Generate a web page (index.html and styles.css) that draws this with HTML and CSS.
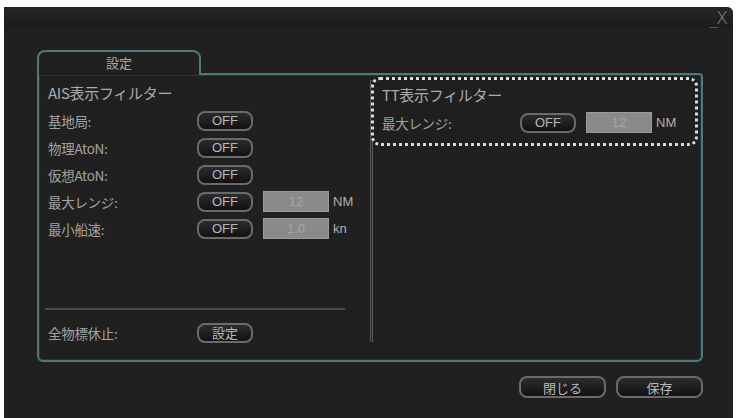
FILE: index.html
```html
<!DOCTYPE html>
<html lang="ja">
<head>
<meta charset="utf-8">
<link rel="stylesheet" href="styles.css">
</head>
<body>
<div class="window">
  <div class="titlebar"><span class="winctl">_X</span></div>
  <div class="main">
    <div class="tab">設定</div>
    <div class="panel">
      <div class="col-left">
        <div class="title">AIS表示フィルター</div>
        <div class="row first"><span class="label">基地局:</span><span class="btn">OFF</span></div>
        <div class="row"><span class="label">物理AtoN:</span><span class="btn">OFF</span></div>
        <div class="row"><span class="label">仮想AtoN:</span><span class="btn">OFF</span></div>
        <div class="row"><span class="label">最大レンジ:</span><span class="btn">OFF</span><span class="field">12</span><span class="unit">NM</span></div>
        <div class="row"><span class="label">最小船速:</span><span class="btn">OFF</span><span class="field">1.0</span><span class="unit">kn</span></div>
        <div class="hrule"></div>
        <div class="row bottom"><span class="label">全物標休止:</span><span class="btn">設定</span></div>
      </div>
      <div class="divider"></div>
      <div class="col-right">
        <div class="ttbox">
          <div class="title">TT表示フィルター</div>
          <div class="row first"><span class="label tt">最大レンジ:</span><span class="btn">OFF</span><span class="field">12</span><span class="unit">NM</span></div>
        </div>
      </div>
    </div>
    <div class="footer">
      <span class="btn big">閉じる</span>
      <span class="btn big">保存</span>
    </div>
  </div>
</div>
</body>
</html>
```

FILE: styles.css
```css
html, body {
  margin: 0;
  padding: 0;
  background: #ffffff;
  width: 737px;
  height: 418px;
  overflow: hidden;
}
.window {
  margin: 7px 0 0 4px;
  width: 729px;
  height: 411px;
  background: #202020;
  border-radius: 0 6px 0 0;
  font-family: "Noto Sans CJK JP", "Noto Sans", sans-serif;
  color: #a8a8a8;
  box-sizing: border-box;
  display: flex;
  flex-direction: column;
}
.titlebar {
  height: 20px;
  background: linear-gradient(#262626, #1c1c1c);
  border-bottom: 1px solid #1a1a1a;
  display: flex;
  justify-content: flex-end;
  align-items: center;
  border-radius: 0 6px 0 0;
}
.winctl {
  color: #858585;
  font-family: "DejaVu Sans", sans-serif;
  font-size: 17px;
  font-weight: 300;
  letter-spacing: -2px;
  margin-right: 7px;
  margin-top: 2px;
}
.main {
  padding-left: 33px;
  display: flex;
  flex-direction: column;
}
.tab {
  margin-top: 22px;
  width: 160px;
  height: 21px;
  border: 2px solid #4a7a7a;
  border-bottom: none;
  border-radius: 8px 8px 0 0;
  background: #202020;
  position: relative;
  z-index: 1;
  margin-bottom: -2px;
  padding-bottom: 2px;
  box-sizing: content-box;
  text-align: center;
  font-size: 13px;
  line-height: 21px;
  color: #a8a8a8;
}
.panel {
  width: 662px;
  height: 285px;
  border: 2px solid #4a7a7a;
  border-radius: 0 4px 6px 6px;
  box-shadow: inset 0 0 0 1px #263636;
  display: flex;
}
.col-left {
  width: 322px;
  padding: 5px 0 14px 9px;
  display: flex;
  flex-direction: column;
}
.title {
  height: 26px;
  line-height: 26px;
  font-size: 15px;
  color: #ababab;
  white-space: nowrap;
  letter-spacing: -0.3px;
}
.row {
  height: 27px;
  display: flex;
  align-items: center;
  font-size: 13.5px;
}
.row.first {
  margin-top: 1px;
}
.label {
  width: 149px;
  white-space: nowrap;
  color: #a2a2a2;
  letter-spacing: -0.3px;
}
.label.tt {
  width: 138px;
}
.btn {
  width: 56px;
  height: 20px;
  box-sizing: border-box;
  border: 2px solid #6a6a6a;
  border-radius: 8px;
  background: linear-gradient(#2c2c2c, #111111);
  color: #b8b8b8;
  font-family: "Liberation Sans", "Noto Sans CJK JP", sans-serif;
  font-size: 13px;
  display: flex;
  align-items: center;
  justify-content: center;
}
.field {
  width: 66px;
  height: 21px;
  margin-left: 10px;
  background: #8a8a8a;
  border: 1px solid #9a9a9a;
  box-sizing: border-box;
  color: #a6a6a6;
  font-family: "Liberation Sans", sans-serif;
  font-size: 13px;
  display: flex;
  align-items: center;
  justify-content: center;
}
.unit {
  margin-left: 4px;
  font-family: "Liberation Sans", sans-serif;
  font-size: 13px;
  color: #b0b0b0;
}
.hrule {
  margin-top: auto;
  margin-left: -3px;
  width: 300px;
  height: 2px;
  background: #4a4a4a;
  margin-bottom: 9px;
}
.row.bottom {
  margin-top: 0;
}
.divider {
  width: 3px;
  margin: 5px 0 18px 0;
  background: linear-gradient(90deg, #555 0, #555 1px, #2a2a2a 1px, #2a2a2a 2px, #5a5a5a 2px);
}
.col-right {
  flex: 1;
  padding-top: 2px;
}
.ttbox {
  margin-left: -2px;
  width: 327px;
  height: 69px;
  box-sizing: border-box;
  border: 3px dotted #dcdcdc;
  border-radius: 9px;
  padding: 2px 0 0 8px;
  background: #1f1f1f;
  position: relative;
}
.ttbox .row.first {
  margin-top: 1px;
}
.footer {
  width: 666px;
  display: flex;
  justify-content: flex-end;
  gap: 10px;
  margin-top: 14px;
}
.btn.big {
  width: 87px;
  height: 22px;
  font-family: "Noto Sans CJK JP", sans-serif;
  font-size: 13px;
}
```
